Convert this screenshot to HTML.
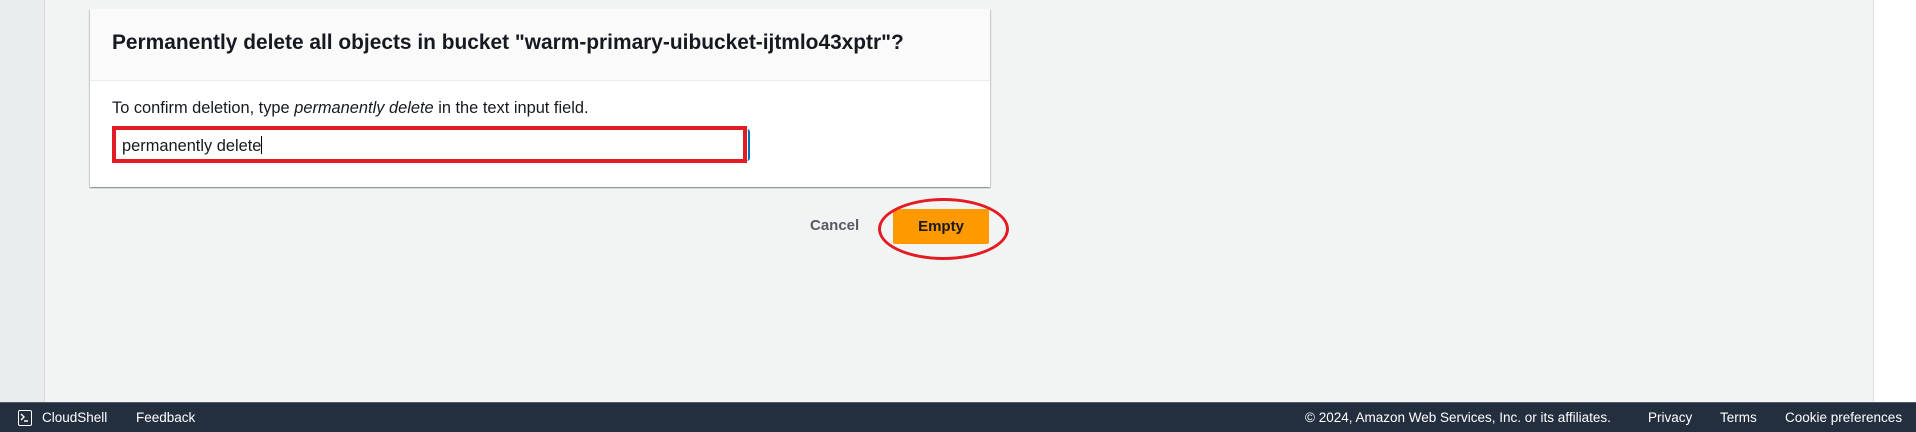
<!DOCTYPE html>
<html><head><meta charset="utf-8"><style>
*{margin:0;padding:0;box-sizing:border-box}
body{width:1916px;height:432px;position:relative;overflow:hidden;background:#f2f3f3;font-family:"Liberation Sans",sans-serif;color:#16191f}
.side{position:absolute;left:0;top:0;width:45px;height:402px;background:#eaeded;border-right:1px solid #d5dbdb}
.right{position:absolute;left:1873px;top:0;width:43px;height:402px;background:#fff;border-left:1px solid #e0e0e0}
.card{position:absolute;left:90px;top:9px;width:900px;height:178px;background:#fff;box-shadow:0 1px 1px rgba(0,28,36,.3),1px 1px 1px rgba(0,28,36,.15),-1px 1px 1px rgba(0,28,36,.15)}
.hd{height:72px;background:#fafafa;border-bottom:1px solid #eaeded;padding:22px 0 0 22px;font-weight:bold;font-size:20.9px}
.p{position:absolute;left:22px;top:90px;font-size:16.4px}
.inp{position:absolute;left:22px;top:117px;width:635px;height:37px;border:4px solid #e31c23;font-size:16.4px;padding:6px 0 0 6px}
.inp:after{content:"";position:absolute;right:-7px;top:-1px;width:3px;height:32px;border-right:2px solid #0073bb;border-radius:0 3px 3px 0}
.cur{display:inline-block;width:1px;height:18px;background:#000;vertical-align:-3px}
.cancel{position:absolute;left:810px;top:217px;font-weight:bold;font-size:15px;color:#545b64}
.btn{position:absolute;left:893px;top:209px;width:96px;height:35px;background:#ff9900;border-radius:2px;font-weight:bold;font-size:15px;text-align:center;line-height:35px}
.ell{position:absolute;left:878px;top:198px;width:131px;height:62px;border:3px solid #e31c23;border-radius:50%}
.ft{position:absolute;left:0;top:402px;width:1916px;height:30px;background:#232f3e;border-top:1px solid #545b64;color:#fff;font-size:13.5px}
.ft span{position:absolute;top:7px}
.ico{position:absolute;left:18px;top:7px;width:14px;height:16px;border:1.5px solid #fff;border-radius:2px}
</style></head><body>
<div class="side"></div><div class="right"></div>
<div class="card">
<div class="hd">Permanently delete all objects in bucket "warm-primary-uibucket-ijtmlo43xptr"?</div>
<div class="p">To confirm deletion, type <i>permanently delete</i> in the text input field.</div>
<div class="inp">permanently delete<span class="cur"></span></div>
</div>
<div class="cancel">Cancel</div>
<div class="btn">Empty</div>
<div class="ell"></div>
<div class="ft">
<div class="ico"><svg width="11" height="13" viewBox="0 0 11 13" style="position:absolute;left:0;top:0"><path d="M2 3l3 3-3 3M5 10h4" stroke="#fff" stroke-width="1.4" fill="none"/></svg></div>
<span style="left:42px">CloudShell</span>
<span style="left:136px">Feedback</span>
<span style="left:1305px">© 2024, Amazon Web Services, Inc. or its affiliates.</span>
<span style="left:1648px">Privacy</span>
<span style="left:1720px">Terms</span>
<span style="left:1785px">Cookie preferences</span>
</div>
</body></html>
